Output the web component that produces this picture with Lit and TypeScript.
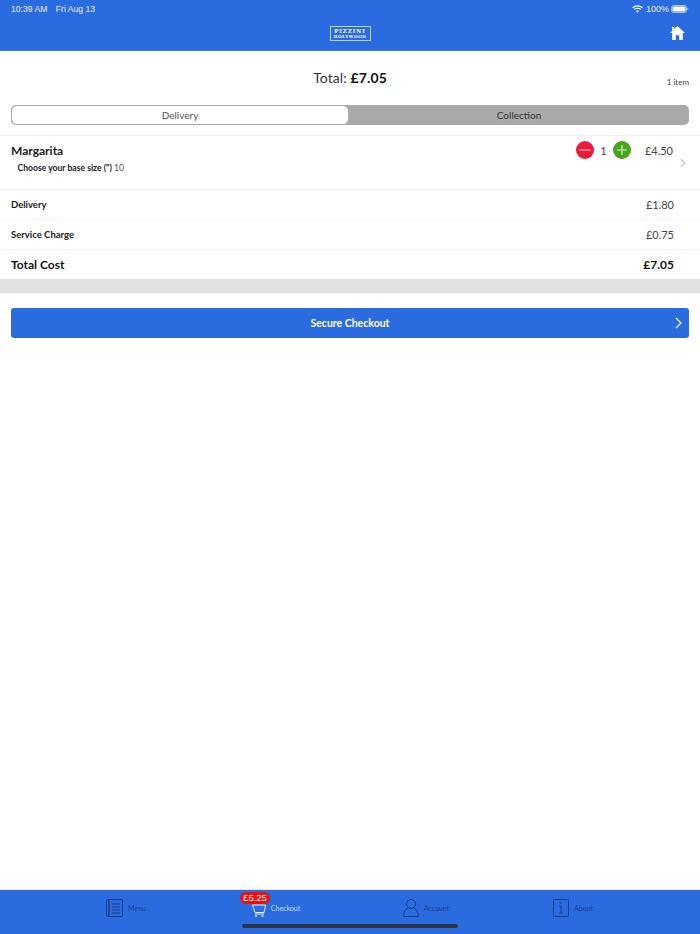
import { LitElement, html, css } from "lit";
import { customElement } from "lit/decorators.js";

@customElement("app-root")
export class AppRoot extends LitElement {
  static styles = css`
    :host { display: block; width: 700px; height: 934px; font-family: Lato, "Open Sans", sans-serif; color: #111; background: #fff; }
    .page { height: 934px; display: flex; flex-direction: column; }
    .header { height: 51px; flex: none; background: #2a6bdf; color: #fff; display: flex; flex-direction: column; box-sizing: border-box; border-bottom: 1px solid #3f7be3; }
    .status { height: 17px; padding: 0 11px; display: flex; align-items: center; font: 8.6px "Liberation Sans", sans-serif; gap: 8.5px; color: #e8effc; }
    .status .sp { flex: 1; }
    .status .right { display: flex; align-items: center; gap: 2px; font-size: 9px; }
    .nav { flex: 1; display: grid; grid-template-columns: 1fr auto 1fr; align-items: center; }
    .logo { grid-column: 2; width: 41px; height: 15px; box-sizing: border-box; border: 1px solid #b9cff5; display: flex; flex-direction: column; align-items: center; justify-content: center; font-family: "DejaVu Serif", serif; font-weight: 700; line-height: 5px; }
    .logo .a { font-size: 5.4px; letter-spacing: 1px; }
    .logo .b { font-size: 4.1px; letter-spacing: .6px; }
    .home { justify-self: end; display: flex; margin: -1px 15px 0 0; }
    .summary { height: 54px; flex: none; display: grid; grid-template-columns: 1fr auto 1fr; padding: 0 11px 1px; align-items: center; box-sizing: border-box; }
    .total { grid-column: 2; font-size: 14px; color: #333; letter-spacing: .1px; }
    .total b { color: #111; font-weight: 700; }
    .count { justify-self: end; font-size: 8px; color: #444; margin-top: 8px; }
    .seg { height: 20px; margin: 0 11px; display: flex; flex: none; background: #a9a9ab; border-radius: 5px; font-size: 10px; color: #333; }
    .seg > div { flex: 1; display: flex; align-items: center; justify-content: center; box-sizing: border-box; }
    .seg .on { background: #fff; border: 1.5px solid #a9a9ab; border-radius: 6px; color: #555; flex: none; width: 338px; }
    .item { margin-top: 10px; height: 55px; flex: none; box-sizing: border-box; border-top: 1px solid #f1f1f1; border-bottom: 1px solid #f1f1f1; padding: 0 11px; position: relative; display: flex; justify-content: space-between; }
    .name { font-size: 12px; font-weight: 700; color: #222; margin-top: 7px; line-height: 15px; }
    .opt { font-size: 8.6px; margin: 4px 0 0 6.5px; line-height: 12px; color: #555; }
    .opt b { color: #222; }
    .qty { display: flex; align-items: center; height: 18px; margin-top: 5px; margin-right: 16px; font-size: 11px; color: #444; }
    .qty svg { display: block; }
    .qty .n { width: 19px; text-align: center; }
    .qty .p { margin-left: 13px; width: 29px; text-align: right; }
    .chev { position: absolute; right: 14px; top: 22px; display: flex; }
    .row { height: 30px; flex: none; box-sizing: border-box; border-bottom: 1px solid #f5f5f5; padding: 0 26px 1px 11px; display: flex; align-items: center; justify-content: space-between; font-size: 9.5px; font-weight: 700; color: #222; }
    .row span:last-child { font-size: 11px; font-weight: 400; color: #444; }
    .row.tot { height: 29px; font-size: 12px; color: #111; border: 0; }
    .row.tot span:last-child { font-size: 12px; font-weight: 700; color: #111; }
    .band { height: 14px; flex: none; background: #e2e2e4; }
    .btn { margin: 15px 11px 0; height: 30px; flex: none; border-radius: 3px; background: #2a6bdf; color: #fff; font-size: 10.5px; font-weight: 700; display: flex; align-items: center; justify-content: center; position: relative; padding-bottom: 1px; box-sizing: border-box; }
    .btn svg { position: absolute; right: 7px; top: 9px; }
    .fill { flex: 1; }
    .tabs { height: 45px; flex: none; box-sizing: border-box; background: #2a6bdf; border-top: 1px solid #dfe9fb; position: relative; display: flex; padding-left: 51px; }
    .tab { width: 150px; height: 36px; display: flex; align-items: center; justify-content: center; gap: 5px; font-size: 7px; color: #1a3f87; position: relative; }
    .tab.last { width: 144px; }
    .tab.act { color: #c9dbf8; }
    .badge { position: absolute; left: 39px; top: 2px; height: 12px; width: 30px; border-radius: 6px; background: #f20c0c; color: #fff; font: 9.5px/12px "Liberation Sans", sans-serif; text-align: center; }
    .bar { position: absolute; left: 242px; bottom: 6px; width: 216px; height: 4px; border-radius: 2px; background: #2c3445; }
  `;

  render() {
    return html`<div class="page">
      <div class="header">
        <div class="status">
          <span>10:39 AM</span><span>Fri Aug 13</span><span class="sp"></span>
          <span class="right">
            <svg width="11" height="8" viewBox="0 0 11 8" fill="none" stroke="#fff"><path d="M.6 2.7C3.4.2 7.6.2 10.4 2.7" stroke-width="1.2"/><path d="M2.2 4.4C4 2.9 7 2.9 8.8 4.4" stroke-width="1.2"/><path d="M5.5 7.8 3.9 6c1-.7 2.2-.7 3.2 0z" fill="#fff" stroke="none"/></svg>
            <span style="margin-left:1px">100%</span>
            <svg width="18" height="8" viewBox="0 0 18 8"><rect x=".5" y=".5" width="15" height="7" rx="2" fill="none" stroke="#a9c3f2"/><rect x="1.5" y="1.5" width="13" height="5" rx="1" fill="#fff"/><path d="M16.4 2.8c.6.2.9.7.9 1.2s-.3 1-.9 1.2z" fill="#a9c3f2"/></svg>
          </span>
        </div>
        <div class="nav">
          <div class="logo"><span class="a">PIZZINI</span><span class="b">HOLYWOOD</span></div>
          <div class="home">
            <svg width="15" height="14" viewBox="0 0 15 14" fill="#fff"><path d="M7.5 0 15 7h-2.2v7H9.2V9.2H5.8V14H2.2V7H0L2.2 5V1h2v2z"/></svg>
          </div>
        </div>
      </div>
      <div class="summary">
        <div class="total">Total: <b>£7.05</b></div>
        <div class="count">1 item</div>
      </div>
      <div class="seg"><div class="on">Delivery</div><div>Collection</div></div>
      <div class="item">
        <div>
          <div class="name">Margarita</div>
          <div class="opt"><b>Choose your base size (")</b> 10</div>
        </div>
        <div class="qty">
          <svg width="18" height="18" viewBox="0 0 18 18"><circle cx="9" cy="9" r="9" fill="#ee1a3c"/><path d="M3.5 9h11" stroke="#f7b8c2" stroke-width="1.2"/></svg>
          <span class="n">1</span>
          <svg width="18" height="18" viewBox="0 0 18 18"><circle cx="9" cy="9" r="9" fill="#45a51c"/><path d="M4 9h10M9 4v10" stroke="#d5eecb" stroke-width="1.2"/></svg>
          <span class="p">£4.50</span>
        </div>
        <div class="chev"><svg width="6" height="10" viewBox="0 0 6 10" fill="none" stroke="#c6c6c8" stroke-width="1.2"><path d="M.8.8 5 5 .8 9.2"/></svg></div>
      </div>
      <div class="row"><span>Delivery</span><span>£1.80</span></div>
      <div class="row"><span>Service Charge</span><span>£0.75</span></div>
      <div class="row tot"><span>Total Cost</span><span>£7.05</span></div>
      <div class="band"></div>
      <div class="btn">Secure Checkout
        <svg width="7" height="12" viewBox="0 0 7 12" fill="none" stroke="#fff" stroke-width="1.1"><path d="M1 1l5 5-5 5"/></svg>
      </div>
      <div class="fill"></div>
      <div class="tabs">
        <div class="tab">
          <svg width="17" height="18" viewBox="0 0 17 18" fill="none" stroke="#1a3f87" stroke-width="1"><rect x=".5" y=".5" width="16" height="17" rx="1.5"/><path d="M3 .5v17" stroke-width="1.5"/><path d="M6 5h8M6 8h8M6 11h8M6 14h8"/></svg>
          <span>Menu</span>
        </div>
        <div class="tab act">
          <span class="badge">£5.25</span>
          <svg width="14" height="13" viewBox="0 0 14 13" fill="none" stroke="#e6eefc" stroke-width="1" style="margin-top:5px"><path d="M.5 1h13L12 8.5H3z"/><path d="M3 10h9"/><circle cx="4" cy="12" r=".7"/><circle cx="10.5" cy="12" r=".7"/></svg>
          <span>Checkout</span>
        </div>
        <div class="tab">
          <svg width="16" height="18" viewBox="0 0 16 18" fill="none" stroke="#1a3f87" stroke-width="1"><circle cx="8" cy="5" r="4.5"/><path d="M5 9C2.5 10.2.5 13 .5 17.5h15C15.5 13 13.5 10.2 11 9"/></svg>
          <span>Account</span>
        </div>
        <div class="tab last">
          <svg width="16" height="18" viewBox="0 0 16 18" fill="none" stroke="#1a3f87" stroke-width="1"><rect x=".5" y=".5" width="15" height="17" rx="1"/><path d="M8 7v7M6.3 7H8M6 14h4" stroke-width="1.1"/><circle cx="8" cy="4.2" r=".8" fill="#1a3f87" stroke="none"/></svg>
          <span>About</span>
        </div>
        <div class="bar"></div>
      </div>
    </div>`;
  }
}
